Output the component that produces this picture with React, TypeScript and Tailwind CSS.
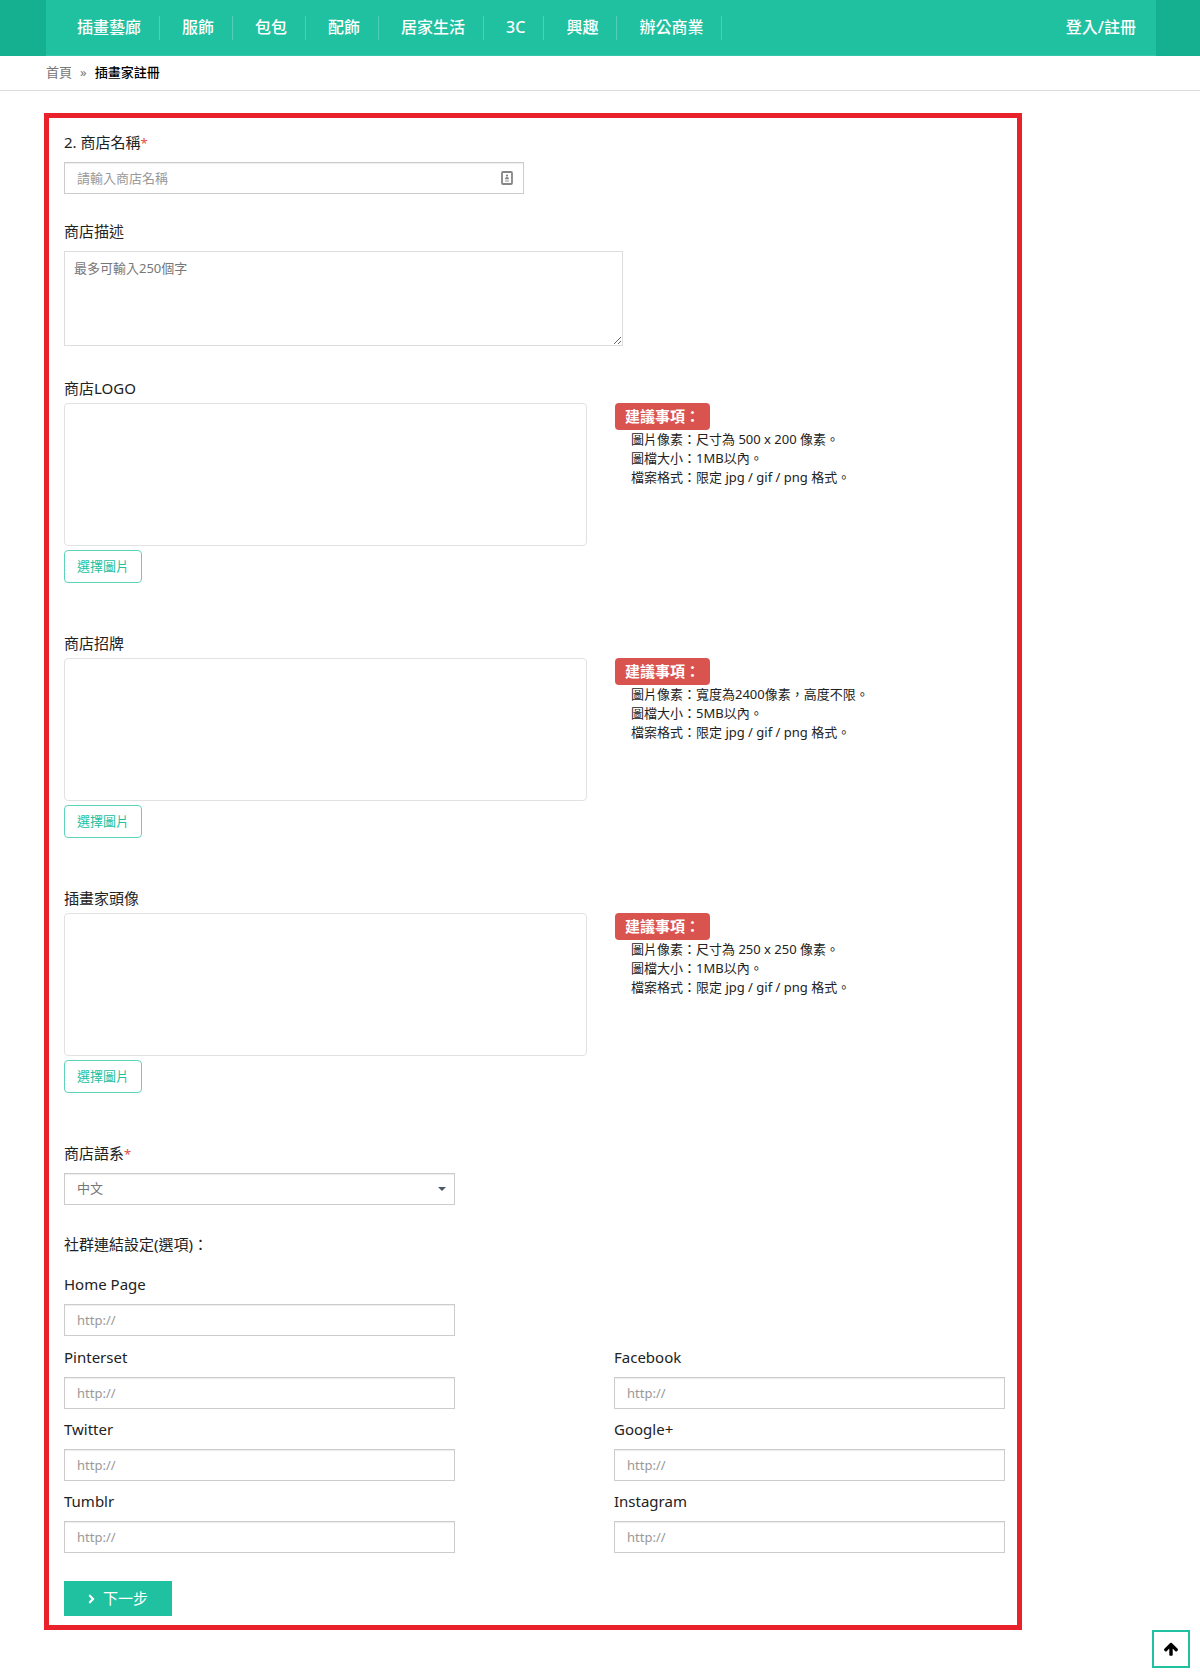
import { useState } from 'react'
import { FaAngleRight } from 'react-icons/fa'

const NAV_ITEMS = ['插畫藝廊', '服飾', '包包', '配飾', '居家生活', '3C', '興趣', '辦公商業']

const UPLOADS = [
  {
    id: 'logo',
    label: '商店LOGO',
    notes: ['圖片像素：尺寸為 500 x 200 像素。', '圖檔大小：1MB以內。', '檔案格式：限定 jpg / gif / png 格式。'],
  },
  {
    id: 'banner',
    label: '商店招牌',
    notes: ['圖片像素：寬度為2400像素，高度不限。', '圖檔大小：5MB以內。', '檔案格式：限定 jpg / gif / png 格式。'],
  },
  {
    id: 'avatar',
    label: '插畫家頭像',
    notes: ['圖片像素：尺寸為 250 x 250 像素。', '圖檔大小：1MB以內。', '檔案格式：限定 jpg / gif / png 格式。'],
  },
]

const SOCIAL_LINKS = ['Pinterset', 'Facebook', 'Twitter', 'Google+', 'Tumblr', 'Instagram']

const inputClass =
  'block h-8 w-full border border-[#ccc] bg-white px-3 text-[13px] shadow-[inset_0_1px_1px_rgba(0,0,0,0.075)] outline-none placeholder:text-[#999] focus:border-[#20c1a1]'

const labelClass = 'block text-[15px] leading-6 text-[#222]'

function Header() {
  return (
    <header className="bg-[#14b090] pr-11 pl-[46px]">
      <div className="flex h-14 items-center justify-between border-b border-[#35c5a9] bg-[#20c1a1] pr-5 pl-[9px] text-base font-medium text-white">
        <nav className="flex">
          {NAV_ITEMS.map((item) => (
            <a
              key={item}
              href="#"
              className="border-r border-[#4fd0b6] pr-[18px] pb-0.5 pl-[22px] leading-[22px] whitespace-nowrap"
            >
              {item}
            </a>
          ))}
        </nav>
        <a href="#" className="pb-0.5 leading-[22px] whitespace-nowrap">
          登入/註冊
        </a>
      </div>
    </header>
  )
}

function Breadcrumb() {
  return (
    <nav className="flex h-[35px] items-center gap-2 border-b border-[#ddd] px-[46px] text-[13px]">
      <a href="#" className="text-[#777]">
        首頁
      </a>
      <span className="text-[#777]">»</span>
      <span className="font-medium text-black">插畫家註冊</span>
    </nav>
  )
}

function Required() {
  return <span className="text-[13px] leading-none text-[#e74c3c]">*</span>
}

function UploadField({ id, label, notes }: { id: string; label: string; notes: string[] }) {
  return (
    <section className="mb-12">
      <h3 id={`${id}-label`} className={labelClass}>
        {label}
      </h3>
      <div className="mt-[3px] flex items-start gap-7">
        <div className="w-[523px]">
          <div className="h-[143px] rounded border border-[#e2e2e2]" />
          <button
            type="button"
            aria-describedby={`${id}-label`}
            className="mt-1 h-[33px] rounded border border-[#5dd3b9] bg-white px-3 text-[13px] text-[#20c1a1] hover:bg-[#20c1a1] hover:text-white"
          >
            選擇圖片
          </button>
        </div>
        <div>
          <span className="inline-block rounded bg-[#d9534f] px-[10px] align-top text-[15px] leading-[27px] font-bold text-white">
            建議事項：
          </span>
          <ul className="pl-4 text-[13px] leading-[19px] text-[#222]">
            {notes.map((note) => (
              <li key={note}>{note}</li>
            ))}
          </ul>
        </div>
      </div>
    </section>
  )
}

function LinkField({ label }: { label: string }) {
  return (
    <div>
      <label htmlFor={label} className={labelClass}>
        {label}
      </label>
      <input id={label} type="text" placeholder="http://" className={`${inputClass} mt-2 text-[#555]`} />
    </div>
  )
}

// small contact card glyph shown at the end of the name field
function CardIcon() {
  return (
    <svg viewBox="0 0 12 14" className="h-[14px] w-3" aria-hidden>
      <rect x="1" y="1" width="10" height="12" rx="1" fill="#fff" stroke="#858585" strokeWidth="1.8" />
      <circle cx="6" cy="4.6" r="1.1" fill="#808080" />
      <path d="M4 8.2c0-3 4-3 4 0z" fill="#808080" />
      <path d="M4 10h4" stroke="#909090" strokeWidth="1" />
    </svg>
  )
}

function ArrowUpIcon() {
  return (
    <svg viewBox="0 0 1792 1792" className="size-4" fill="currentColor" aria-hidden>
      <path d="M1675 971q0 51-37 90l-75 75q-38 38-91 38-54 0-90-38l-294-293v704q0 52-37.5 84.5t-90.5 32.5h-128q-53 0-90.5-32.5t-37.5-84.5v-704l-294 293q-36 38-90 38t-90-38l-75-75q-38-38-38-90 0-53 38-91l651-651q35-37 90-37 54 0 91 37l651 651q37 39 37 91z" />
    </svg>
  )
}

export default function App() {
  const [language, setLanguage] = useState('zh')

  return (
    <div className="min-h-screen bg-white font-['Noto_Sans','Noto_Sans_CJK_TC',sans-serif]">
      <Header />
      <Breadcrumb />

      <main className="px-11 pt-[22px] pb-11">
        <form
          className="max-w-[978px] border-[5px] border-[#e8212a] pt-3 pr-3 pb-[9px] pl-[15px]"
          onSubmit={(event) => event.preventDefault()}
        >
          <label htmlFor="shop-name" className={labelClass}>
            2. 商店名稱
            <Required />
          </label>
          <div className="relative mt-2 max-w-[460px]">
            <input
              id="shop-name"
              type="text"
              placeholder="請輸入商店名稱"
              className={`${inputClass} text-[#555]`}
            />
            <span className="absolute inset-y-0 right-[11px] flex items-center">
              <CardIcon />
            </span>
          </div>

          <label htmlFor="shop-description" className={`${labelClass} mt-[25px]`}>
            商店描述
          </label>
          <textarea
            id="shop-description"
            maxLength={250}
            placeholder="最多可輸入250個字"
            className="mt-2 mb-[30px] block h-[95px] w-full max-w-[559px] resize border border-[#ddd] px-[9px] py-1.5 text-[13px] leading-5 text-[#555] outline-none placeholder:text-[#777]"
          />

          {UPLOADS.map((upload) => (
            <UploadField key={upload.id} {...upload} />
          ))}

          <label htmlFor="shop-language" className={labelClass}>
            商店語系
            <Required />
          </label>
          <div className="relative mt-2 max-w-[391px]">
            <select
              id="shop-language"
              value={language}
              onChange={(event) => setLanguage(event.target.value)}
              className={`${inputClass} appearance-none text-[#777]`}
            >
              <option value="zh">中文</option>
              <option value="en">English</option>
            </select>
            <svg
              viewBox="0 0 8 4"
              className="pointer-events-none absolute top-[14px] right-[9px] h-1 w-2"
              aria-hidden
            >
              <path d="M0 0h8L4 4z" fill="#4b5966" />
            </svg>
          </div>

          <h3 className={`${labelClass} mt-[27px] mb-4`}>社群連結設定(選項)：</h3>
          <div className="mb-[9px] grid grid-cols-2 gap-x-[159px]">
            <LinkField label="Home Page" />
          </div>
          <div className="grid grid-cols-2 gap-x-[159px] gap-y-2">
            {SOCIAL_LINKS.map((label) => (
              <LinkField key={label} label={label} />
            ))}
          </div>

          <button
            type="submit"
            className="mt-7 flex h-[35px] items-center gap-2 bg-[#20c1a1] px-6 text-[15px] text-white hover:bg-[#14b090]"
          >
            <FaAngleRight className="h-[14px] w-[7px]" />
            下一步
          </button>
        </form>
      </main>

      <a
        href="#"
        aria-label="回到頂端"
        className="fixed right-[10px] bottom-2 flex size-[38px] items-center justify-center border-2 border-[#20c1a1] bg-white text-black"
      >
        <ArrowUpIcon />
      </a>
    </div>
  )
}
